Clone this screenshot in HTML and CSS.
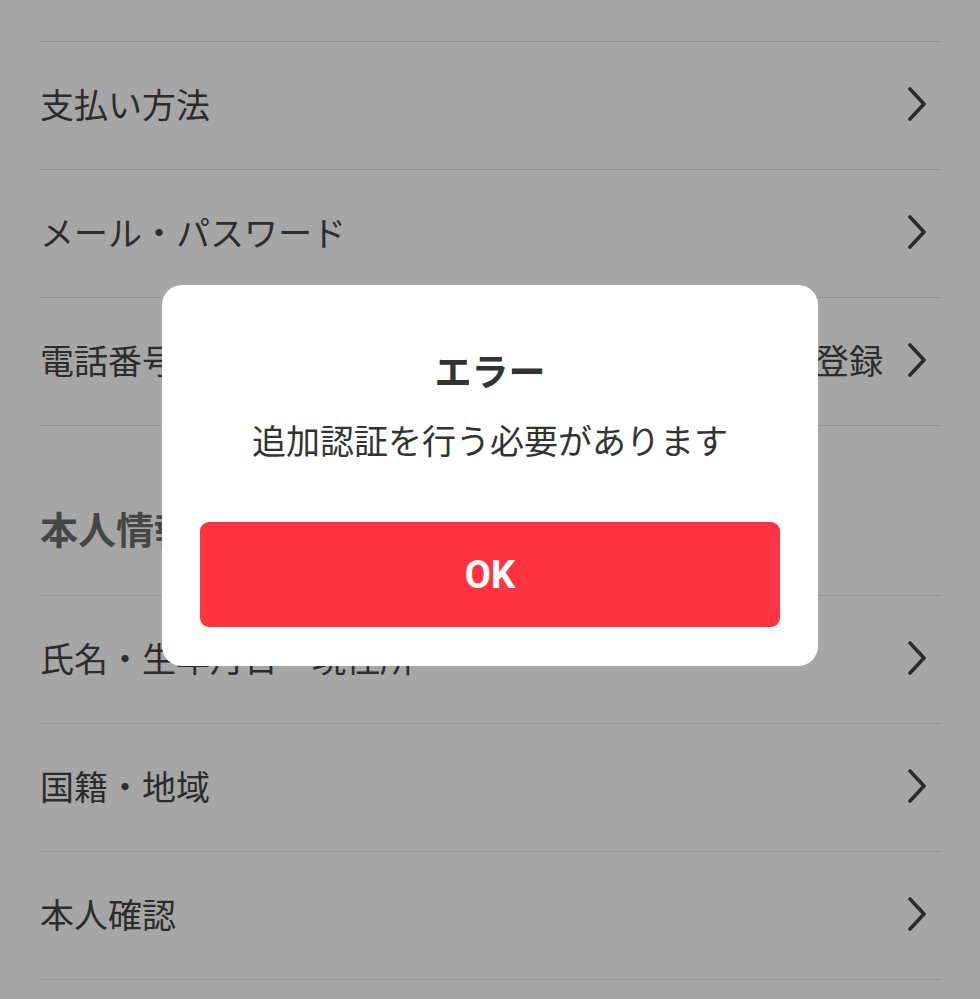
FILE: index.html
```html
<!DOCTYPE html>
<html lang="ja">
<head>
    <meta charset="UTF-8">
    <meta name="viewport" content="width=device-width, initial-scale=1.0">
    <title>アカウント設定</title>
    <link rel="stylesheet" href="styles.css">
</head>
<body>
    <div class="ajustes">
        <ul class="lista">
            <li class="fila">
                <span class="fila-texto">支払い方法</span>
                <svg class="flecha" viewBox="0 0 20 34"><path d="M3 2 L17 17 L3 32"/></svg>
            </li>
            <li class="fila">
                <span class="fila-texto">メール・パスワード</span>
                <svg class="flecha" viewBox="0 0 20 34"><path d="M3 2 L17 17 L3 32"/></svg>
            </li>
            <li class="fila">
                <span class="fila-texto">電話番号</span>
                <span class="fila-valor">未登録</span>
                <svg class="flecha" viewBox="0 0 20 34"><path d="M3 2 L17 17 L3 32"/></svg>
            </li>
        </ul>

        <h3 class="seccion">本人情報</h3>

        <ul class="lista">
            <li class="fila">
                <span class="fila-texto">氏名・生年月日・現住所</span>
                <svg class="flecha" viewBox="0 0 20 34"><path d="M3 2 L17 17 L3 32"/></svg>
            </li>
            <li class="fila">
                <span class="fila-texto">国籍・地域</span>
                <svg class="flecha" viewBox="0 0 20 34"><path d="M3 2 L17 17 L3 32"/></svg>
            </li>
            <li class="fila">
                <span class="fila-texto">本人確認</span>
                <svg class="flecha" viewBox="0 0 20 34"><path d="M3 2 L17 17 L3 32"/></svg>
            </li>
        </ul>
    </div>

    <div class="capa">
        <div class="dialogo">
            <h2 class="dialogo-titulo">エラー</h2>
            <p class="dialogo-mensaje">追加認証を行う必要があります</p>
            <button class="boton-ok">OK</button>
        </div>
    </div>
</body>
</html>
```

FILE: styles.css
```css
:root {
    --texto: #444;
    --linea: #e2e2e2;
    --rojo: #ff3341;
}

body {
    margin: 0;
    background: #fff;
    font-family: "Noto Sans CJK JP", "Noto Sans", sans-serif;
    color: var(--texto);
}

.ajustes {
    padding: 41px 39px 0 40px;
}

.lista {
    list-style: none;
    margin: 0;
    padding: 0;
    border-top: 1px solid var(--linea);
}

.fila {
    display: flex;
    align-items: center;
    box-sizing: border-box;
    height: 128px;
    padding-bottom: 4px;
    border-bottom: 1px solid var(--linea);
    font-size: 34px;
}

.fila-texto {
    flex: 1;
    line-height: 1;
}

.fila-valor {
    line-height: 1;
    margin-right: 24px;
}

.flecha {
    width: 20px;
    height: 34px;
    margin-right: 14px;
    fill: none;
    stroke: #444;
    stroke-width: 3.6;
    stroke-linecap: round;
    stroke-linejoin: round;
}

.seccion {
    margin: 0;
    padding: 82px 0 47px;
    font-size: 38px;
    line-height: 40px;
    font-weight: bold;
    color: #6c6c6c;
}

.capa {
    position: fixed;
    inset: 0;
    background: rgba(0, 0, 0, 0.35);
    display: flex;
    justify-content: center;
    align-items: flex-start;
    padding-top: 285px;
}

.dialogo {
    width: 656px;
    box-sizing: border-box;
    background: #fff;
    border-radius: 20px;
    padding: 59px 38px 39px;
    text-align: center;
    color: #333;
}

.dialogo-titulo {
    margin: 0;
    font-size: 37px;
    line-height: 52px;
    font-weight: bold;
}

.dialogo-mensaje {
    margin: 20px 0 0;
    font-size: 34px;
    line-height: 48px;
}

.boton-ok {
    display: block;
    width: 100%;
    height: 105px;
    margin-top: 58px;
    border: none;
    border-radius: 9px;
    background: var(--rojo);
    color: #fff;
    font-family: Roboto, "Noto Sans", sans-serif;
    font-size: 38px;
    font-weight: bold;
}
```
